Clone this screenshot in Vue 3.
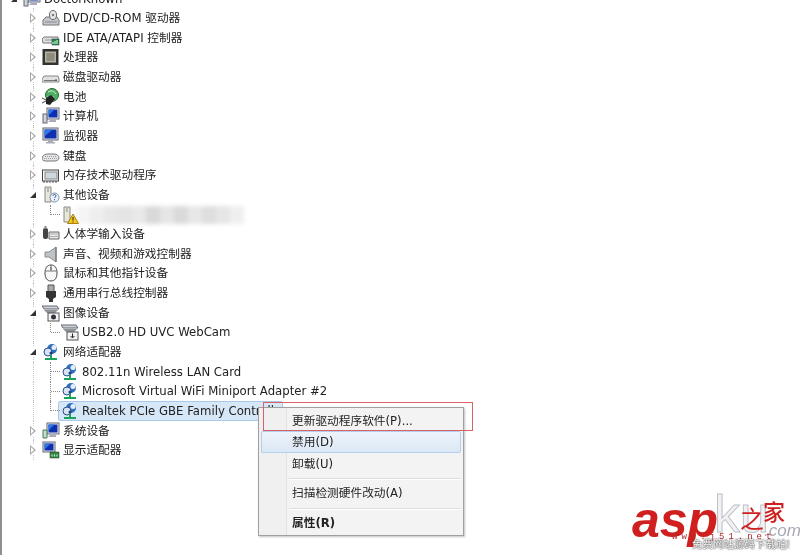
<template>
  <div class="page">
    <div class="tree">
      <template v-for="row in rows" :key="row.id">
        <div class="row" :class="{ child: row.child, last: row.last, root: row.root }">
          <span v-if="!row.child" class="arrow" :class="row.open ? 'open' : 'closed'"></span>
          <span v-else class="link"></span>
          <svg class="icon" viewBox="0 0 18 18"><use :href="'#' + row.icon" /></svg>
          <span v-if="row.blur" class="smudge">
            <i v-for="(c, i) in smudge" :key="i" :style="{ background: c }"></i>
          </span>
          <span v-else class="label" :class="{ selected: row.selected }">{{ row.text }}</span>
        </div>
      </template>
    </div>

    <!-- icon set -->
    <svg class="defs" width="0" height="0">
      <defs>
        <g id="dvd">
          <path d="M1 11l3-3h11l2 3v5H1z" fill="#c4c8cd" stroke="#777" />
          <ellipse cx="11" cy="6" rx="3.500" ry="4.500" fill="#e8e8e8" stroke="#666" />
          <circle cx="11" cy="6" r="1.200" fill="#777" />
          <path d="M3 13h12" stroke="#888" />
        </g>
        <g id="ide">
          <path d="M0 10l2-2h14v6H1z" fill="#dcdfe2" stroke="#777" />
          <path d="M3 11h9" stroke="#999" />
          <rect x="10" y="10" width="7" height="6" fill="#2f8a3a" stroke="#235" stroke-width=".5" />
          <path d="M11 15v-2M13 15v-3M15 15v-4" stroke="#cfe" />
        </g>
        <g id="cpu">
          <rect x="0.500" y="1" width="16" height="16" fill="#333330" />
          <rect x="3" y="3.500" width="11" height="11" fill="#b7b3a3" />
          <rect x="4.500" y="5" width="8" height="8" fill="#8f8c7e" />
        </g>
        <g id="disk">
          <path d="M0 11l2-3h14l1 3v3H0z" fill="#dfe1e4" stroke="#888" />
          <path d="M2 12.500h12" stroke="#777" />
          <rect x="13" y="11.500" width="2" height="1.500" fill="#555" />
        </g>
        <g id="battery">
          <circle cx="10" cy="7" r="6.500" fill="#4fb063" stroke="#2c6b3a" />
          <path d="M6 4c3-2 6-1 8 2M5 9c2 1 5 1 7 0" stroke="#d8f0dc" fill="none" />
          <path d="M4 10l5-3 4 4-5 6-4-1z" fill="#222" />
          <path d="M0 15l4-2M0 10l4 2" stroke="#444" />
        </g>
        <g id="computer">
          <rect x="5" y="1" width="12" height="11" fill="#e9edf2" stroke="#667" />
          <rect x="6.500" y="2.500" width="9" height="8" fill="#0d2fb0" />
          <path d="M6.500 2.500h6l-6 6z" fill="#2f77e0" />
          <rect x="1" y="7" width="4" height="9" fill="#cdd2d8" stroke="#667" />
          <path d="M8 13h6v2H6z" fill="#aab" />
        </g>
        <g id="monitor">
          <rect x="1" y="1" width="15" height="12" fill="#dfe3e8" stroke="#667" />
          <rect x="2.500" y="2.500" width="12" height="9" fill="#0d2fb0" />
          <path d="M2.500 2.500h8l-8 7z" fill="#2f77e0" />
          <path d="M6 13h5v2h2v1.500H4V15h2z" fill="#aab" />
        </g>
        <g id="keyboard">
          <path d="M0 11c1-3 3-4 6-4h6c3 0 5 2 5 4s-2 3-5 3H4c-3 0-4-1-4-3z" fill="#e4e5e8" stroke="#777" />
          <path d="M3 9.500h11M2 11.500h13" stroke="#999" stroke-dasharray="1 1" />
        </g>
        <g id="memory">
          <rect x="0.500" y="4" width="16" height="11" fill="#fafafa" stroke="#444" />
          <rect x="3" y="6" width="12" height="7" fill="#ccd8dc" stroke="#888" />
          <path d="M2 15v2M5 15v2M8 15v2M11 15v2M14 15v2" stroke="#555" />
        </g>
        <g id="other">
          <path d="M3 1h6v15H3z" fill="#e8e6d8" stroke="#888" />
          <path d="M5 3h2M5 5h2" stroke="#888" />
          <circle cx="12.500" cy="11.500" r="4.500" fill="#eef2f8" stroke="#7a8db0" />
          <path d="M11 10c0-2 3-2 3 0 0 1-1.500 1-1.500 2M12.500 13.200v1" stroke="#2b4f8f" fill="none" />
        </g>
        <g id="warn">
          <path d="M3 1h6v15H3z" fill="#e8e6d8" stroke="#888" />
          <path d="M5 3h2M5 5h2" stroke="#888" />
          <path d="M12 8l5.500 9.500h-11z" fill="#f6c81e" stroke="#a8820f" />
          <path d="M12 11v3.500M12 15.500v1" stroke="#222" />
        </g>
        <g id="hid">
          <rect x="1" y="3" width="5" height="11" rx="2" fill="#444" />
          <rect x="2.500" y="1" width="2" height="3" fill="#888" />
          <path d="M7 7h10v7H7z" fill="#e8e8e8" stroke="#666" />
          <path d="M8.500 9h7M8.500 11.500h7" stroke="#777" stroke-dasharray="1 1" />
        </g>
        <g id="sound">
          <path d="M3 7h4l7-5v15l-7-5H3z" fill="#c0c3c6" stroke="#8a8d90" />
          <path d="M14 2v15" stroke="#666" />
        </g>
        <g id="mouse">
          <path d="M9 1c4 0 6 3 6 8s-2 8-6 8-6-3-6-8 2-8 6-8z" fill="#f7f7f7" stroke="#444" />
          <path d="M9 1v6M3.500 7h11" stroke="#777" />
          <rect x="8" y="3" width="2" height="3" fill="#888" />
        </g>
        <g id="usb">
          <path d="M6 1h6v7H6z" fill="#aaa" stroke="#555" />
          <path d="M4 7h10v6l-3 2v3H7v-3l-3-2z" fill="#333" />
        </g>
        <g id="camera">
          <path d="M0 2h15l2 3H2z" fill="#d0d3d6" stroke="#667" />
          <path d="M2 6h14l-3 3H5z" fill="#8f9499" />
          <rect x="6" y="9" width="11" height="8" fill="#f3f3f3" stroke="#555" />
          <circle cx="11.500" cy="13" r="2.500" fill="#334" />
        </g>
        <g id="webcam">
          <path d="M0 2h15l2 3H2z" fill="#d0d3d6" stroke="#667" />
          <path d="M2 6h14l-3 3H5z" fill="#8f9499" />
          <rect x="6" y="9" width="11" height="8" fill="#f3f3f3" stroke="#555" />
          <path d="M11.500 10.500v4M9.500 13l2 2 2-2" stroke="#222" fill="none" />
        </g>
        <g id="net">
          <circle cx="10" cy="6" r="5" fill="#2f6fc0" />
          <circle cx="6" cy="9" r="4" fill="#d8e4f4" stroke="#2a4f90" />
          <circle cx="12" cy="4.500" r="2.500" fill="#e4edf8" />
          <circle cx="9" cy="10" r="1.500" fill="#1b3f80" />
          <path d="M9 12v3M3 16h12" stroke="#1aa35a" stroke-width="2" />
        </g>
        <g id="system">
          <rect x="5" y="1" width="12" height="11" fill="#e9edf2" stroke="#667" />
          <rect x="6.500" y="2.500" width="9" height="8" fill="#0d2fb0" />
          <path d="M6.500 2.500h6l-6 6z" fill="#2f77e0" />
          <path d="M1 8h4v8H1z" fill="#bfe0c8" stroke="#4a7a5a" />
          <path d="M8 13h6v2H6z" fill="#aab" />
        </g>
        <g id="display">
          <rect x="1" y="1" width="12" height="10" fill="#dfe3e8" stroke="#667" />
          <rect x="2.500" y="2.500" width="9" height="7" fill="#0d2fb0" />
          <path d="M2.500 2.500h6l-6 6z" fill="#2f77e0" />
          <rect x="8" y="11" width="9" height="6" fill="#2f8a3a" stroke="#333" stroke-width=".5" />
          <path d="M10 15.500v-2M12.500 15.500v-2M15 15.500v-2" stroke="#cfe" />
        </g>
      </defs>
    </svg>

    <div class="menu">
      <div class="menu-item first">更新驱动程序软件(P)...</div>
      <div class="menu-item hover">禁用(D)</div>
      <div class="menu-item">卸载(U)</div>
      <div class="sep"></div>
      <div class="menu-item">扫描检测硬件改动(A)</div>
      <div class="sep"></div>
      <div class="menu-item strong">属性(R)</div>
    </div>
    <div class="mark"></div>

    <div class="logo">
      <span class="ku">ku</span>
      <span class="asp">asp</span>
      <span class="zhi">之</span>
      <span class="jia">家</span>
      <span class="com">.com</span>
      <span class="url">www.j51.net</span>
      <span class="slogan">免费网站源码下载站!</span>
    </div>
  </div>
</template>

<script setup>
const rows = [
  { id: 0, text: 'DoctorKnown', icon: 'computer', open: true, root: true },
  { id: 1, text: 'DVD/CD-ROM 驱动器', icon: 'dvd' },
  { id: 2, text: 'IDE ATA/ATAPI 控制器', icon: 'ide' },
  { id: 3, text: '处理器', icon: 'cpu' },
  { id: 4, text: '磁盘驱动器', icon: 'disk' },
  { id: 5, text: '电池', icon: 'battery' },
  { id: 6, text: '计算机', icon: 'computer' },
  { id: 7, text: '监视器', icon: 'monitor' },
  { id: 8, text: '键盘', icon: 'keyboard' },
  { id: 9, text: '内存技术驱动程序', icon: 'memory' },
  { id: 10, text: '其他设备', icon: 'other', open: true },
  { id: 11, icon: 'warn', child: true, last: true, blur: true },
  { id: 12, text: '人体学输入设备', icon: 'hid' },
  { id: 13, text: '声音、视频和游戏控制器', icon: 'sound' },
  { id: 14, text: '鼠标和其他指针设备', icon: 'mouse' },
  { id: 15, text: '通用串行总线控制器', icon: 'usb' },
  { id: 16, text: '图像设备', icon: 'camera', open: true },
  { id: 17, text: 'USB2.0 HD UVC WebCam', icon: 'webcam', child: true, last: true },
  { id: 18, text: '网络适配器', icon: 'net', open: true },
  { id: 19, text: '802.11n Wireless LAN Card', icon: 'net', child: true },
  { id: 20, text: 'Microsoft Virtual WiFi Miniport Adapter #2', icon: 'net', child: true },
  { id: 21, text: 'Realtek PCIe GBE Family Controller', icon: 'net', child: true, last: true, selected: true },
  { id: 22, text: '系统设备', icon: 'system' },
  { id: 23, text: '显示适配器', icon: 'display' }
]

const smudge = ['#f5f5f5', '#eeeeee', '#e8e8e8', '#e4e4e4', '#e9e9e9', '#d9d9d9', '#e6e6e6', '#dadada', '#e8e8e8', '#dedede', '#e6e6e6', '#efefef']
</script>

<style>
html,
body {
  margin: 0;
  background: #fff;
}
</style>

<style scoped>
.page {
  position: relative;
  width: 800px;
  height: 555px;
  overflow: hidden;
  background: #fff;
  border-left: 2px solid #8f8f8f;
  box-sizing: border-box;
  font-family: "DejaVu Sans", "Noto Sans CJK SC", sans-serif;
  font-size: 11.7px;
  color: #222;
}

.tree {
  margin-top: -11.3px;
  padding-left: 26px;
  filter: blur(0.4px);
}

.row {
  position: relative;
  display: flex;
  align-items: center;
  height: 19.65px;
}

.row::before {
  content: "";
  position: absolute;
  left: 4.500px;
  top: 0;
  bottom: 0;
  border-left: 1px dotted #c4c4c4;
}

.row.root {
  margin-left: -19px;
}

.row.root::before {
  display: none;
}

.row.child {
  padding-left: 21px;
}

.row.child::after {
  content: "";
  position: absolute;
  left: 22px;
  top: 0;
  height: 100%;
  border-left: 1px dotted #8a8a8a;
}

.row.child.last::after {
  height: 50%;
}

.arrow {
  position: relative;
  z-index: 1;
  width: 8px;
  height: 10px;
  margin-right: 6px;
  background: #fff;
}

.arrow.closed::before {
  content: "";
  position: absolute;
  left: 2px;
  top: 0;
  border-left: 6px solid #a6a6a6;
  border-top: 5px solid transparent;
  border-bottom: 5px solid transparent;
}

.arrow.closed::after {
  content: "";
  position: absolute;
  left: 3px;
  top: 2px;
  border-left: 3px solid #fff;
  border-top: 3px solid transparent;
  border-bottom: 3px solid transparent;
}

.arrow.open::before {
  content: "";
  position: absolute;
  left: 2px;
  top: 2px;
  border-right: 6px solid #333;
  border-top: 6px solid transparent;
}

.link {
  position: relative;
  z-index: 1;
  width: 9px;
  margin-left: 2px;
  margin-right: 1px;
  border-top: 1px dotted #8a8a8a;
}

.icon {
  width: 18px;
  height: 18px;
  flex-shrink: 0;
}

.label {
  margin-left: 2px;
  padding: 0 1px;
  white-space: nowrap;
  line-height: 18px;
}

.row.child .icon {
  position: relative;
  z-index: 1;
}

.row.child .label {
  margin-left: 2px;
}

.row.child .label.selected {
  position: relative;
  z-index: 0;
  box-sizing: border-box;
  width: 225px;
  margin-left: -21px;
  padding-left: 23px;
  border: 1px solid #a9c9ea;
  border-radius: 2px;
  background: #d6e7f8;
}

.smudge {
  display: flex;
  width: 168px;
  height: 18px;
  margin-left: -3px;
  filter: blur(2px);
}

.smudge i {
  flex: 1;
}

.menu {
  position: absolute;
  left: 256px;
  top: 407px;
  width: 206px;
  box-sizing: border-box;
  height: 129px;
  padding: 2px;
  background: linear-gradient(to right, #f0f0f0 27px, #e2e2e2 27px, #e2e2e2 28px, #f3f3f3 28px);
  border: 1px solid #a0a0a0;
  box-shadow: 1px 1px 2px rgba(0, 0, 0, 0.25);
  filter: blur(0.4px);
}

.menu-item {
  height: 21px;
  line-height: 21px;
  padding-left: 31px;
  white-space: nowrap;
}

.menu-item.first {
  line-height: 23px;
}

.menu-item.hover {
  height: 22px;
  line-height: 22px;
  background: linear-gradient(#eef4fb, #dbe7f5);
  border-radius: 2px;
  box-shadow: inset 0 0 0 1px #b4cfee;
}

.menu-item.hover + .menu-item {
  line-height: 23px;
}

.menu-item.strong {
  font-weight: bold;
}

.sep {
  height: 1px;
  margin: 4px 0 4px 28px;
  background: #dcdcdc;
  box-shadow: 0 1px 0 #fff;
}

.mark {
  position: absolute;
  left: 261px;
  top: 402px;
  width: 210px;
  height: 29px;
  box-sizing: border-box;
  border: 1px solid #d9616a;
}

.logo {
  position: absolute;
  left: 628px;
  top: 492px;
  width: 172px;
  height: 63px;
  filter: blur(0.3px);
}

.logo span {
  position: absolute;
  white-space: nowrap;
}

.asp {
  left: 2px;
  top: -2px;
  font: italic bold 50px/60px "Liberation Sans", sans-serif;
  color: #cf1f1f;
}

.ku {
  left: 84px;
  top: -8px;
  font: 52px/60px "Liberation Sans", sans-serif;
  color: #f1f1f4;
  -webkit-text-stroke: 1px #bfc0ca;
}

.zhi {
  left: 110px;
  top: 12px;
  font: 24px/28px "Noto Sans CJK SC", sans-serif;
  color: #cf1f1f;
}

.jia {
  left: 133px;
  top: 5px;
  font: 500 22px/26px "Noto Sans CJK SC", sans-serif;
  color: #cf1f1f;
}

.com {
  left: 134px;
  top: 30px;
  font: italic 17px/18px "Liberation Sans", sans-serif;
  color: #a9a9b6;
}

.url {
  left: 42px;
  top: 40px;
  font: 9px/10px "Liberation Mono", monospace;
  letter-spacing: 4px;
  color: #b02a2a;
}

.slogan {
  left: 62px;
  top: 45px;
  font: 10.5px/14px "Noto Sans CJK SC", sans-serif;
  color: #fff;
  text-shadow: 0 0 2px #333, 0 0 1px #333;
}

.defs {
  position: absolute;
}
</style>
